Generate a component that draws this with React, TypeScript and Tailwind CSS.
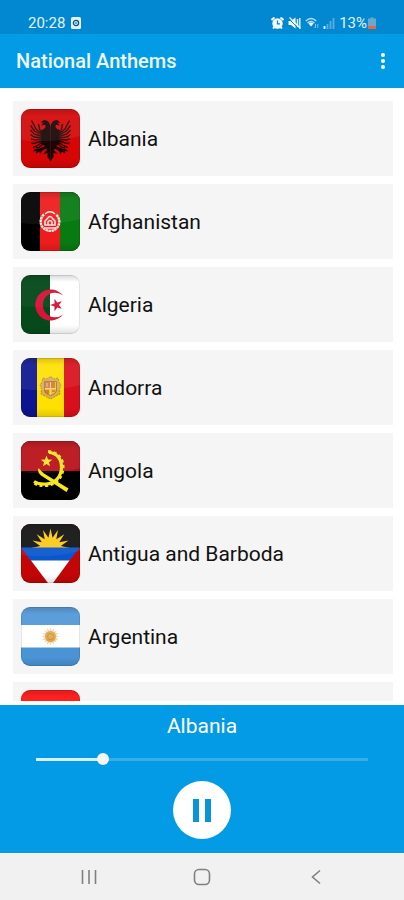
import { useState, type ReactNode } from 'react';

function star(cx: number, cy: number, outer: number, inner: number, points: number, turn = -90) {
  return Array.from({ length: points * 2 }, (_, i) => {
    const r = i % 2 ? inner : outer;
    const a = ((turn + (i * 180) / points) * Math.PI) / 180;
    return `${(cx + r * Math.cos(a)).toFixed(2)},${(cy + r * Math.sin(a)).toFixed(2)}`;
  }).join(' ');
}

function Flag({ id, gloss = 0.1, children }: { id: string; gloss?: number; children: ReactNode }) {
  return (
    <svg viewBox="0 0 59 59" className="size-[59px] shrink-0" aria-hidden="true">
      <defs>
        <clipPath id={`${id}-clip`}>
          <rect width="59" height="59" rx="9" />
        </clipPath>
        <linearGradient id={`${id}-shade`} x1="0" y1="0" x2="0" y2="1">
          <stop offset="0" stopColor="#000" stopOpacity="0.15" />
          <stop offset="0.12" stopColor="#000" stopOpacity="0" />
          <stop offset="0.85" stopColor="#000" stopOpacity="0" />
          <stop offset="1" stopColor="#000" stopOpacity="0.12" />
        </linearGradient>
      </defs>
      <g clipPath={`url(#${id}-clip)`}>
        {children}
        <path d="M0 0H59V27Q30 35 0 31Z" fill="#fff" opacity={gloss} />
        <rect width="59" height="59" fill={`url(#${id}-shade)`} />
        <rect x="0.5" y="0.5" width="58" height="58" rx="8.5" fill="none" stroke="#000" strokeOpacity="0.1" />
      </g>
    </svg>
  );
}

const eagleHalf =
  'M29.5 18C29 14 27 11 23 11L19.500 13.500L22.500 13.800L20 16.500L23.500 15.800C25 16.500 25 18 23.500 19.500L20 21.500V35L24 37L17.500 40L14 40L12 42.500L15.500 42L14.500 44.500L18.500 42.500L19 45.500L21.500 41.500L25.500 39.500L26 41L22.500 45L26.500 44L26.500 48L29.500 52.500Z';
const wingHalf =
  'M21 24L18.500 20L17.500 15M21 25L15 20L10.500 11.500M21 26L13.500 22L9.500 16.500M21 27.500L13 25L9.500 21M21 29L13 28L9.500 25.500M21 30.500L14 31L10 30M21 32L14.500 34L10.500 34.500M21 33.500L16 37L12 38.500M22 35L18 38.500L15 39';

function Albania() {
  return (
    <Flag id="albania" gloss={0.07}>
      <rect width="59" height="59" fill="#d60606" />
      <g fill="#160606">
        <path d={eagleHalf} />
        <path d={eagleHalf} transform="matrix(-1 0 0 1 59 0)" />
      </g>
      <g fill="none" stroke="#2a0606" strokeWidth="1.400">
        <path d={wingHalf} />
        <path d={wingHalf} transform="matrix(-1 0 0 1 59 0)" />
      </g>
    </Flag>
  );
}

function Afghanistan() {
  return (
    <Flag id="afghanistan" gloss={0.06}>
      <rect width="59" height="59" fill="#000" />
      <rect x="19" width="20" height="59" fill="#ee1c1c" />
      <rect x="39" width="20" height="59" fill="#087a12" />
      <g fill="none" stroke="#fae4df">
        <path d="M23 22.500A9.300 9.300 0 1 0 35 22.500" strokeWidth="2.400" strokeDasharray="2.500 0.500" />
        <path d="M24 22Q29 17.500 34 22M25.500 21Q29 18.500 32.500 21" strokeWidth="1.500" />
        <path d="M24 33V29L26 27Q29 22 32 27L34 29V33ZM27 33V30Q29 27 31 30V33M23 36H35" strokeWidth="1.600" />
      </g>
    </Flag>
  );
}

function Algeria() {
  return (
    <Flag id="algeria" gloss={0.04}>
      <rect width="59" height="59" fill="#fff" />
      <rect width="29" height="59" fill="#064a1c" />
      <path d="M42 20.500A15.500 15.500 0 1 0 42 39.500A12.300 12.300 0 1 1 42 20.500Z" fill="#d8143a" />
      <polygon points={star(35.5, 30, 6.5, 2.5, 5, 180)} fill="#d8143a" />
    </Flag>
  );
}

function Andorra() {
  return (
    <Flag id="andorra" gloss={0.08}>
      <rect width="59" height="59" fill="#ffe000" />
      <rect width="16" height="59" fill="#0c1490" />
      <rect x="43" width="16" height="59" fill="#d80f1c" />
      <path
        d="M22 20L26 21L29.500 18.500L33 21L37 20L38 24L40 27L38.500 31L39 36L35 38L29.500 41L24 38L20 36L20.500 31L19 27L21 24Z"
        fill="#d8b04a"
        stroke="#a98a4a"
        strokeDasharray="2 1"
      />
      <path d="M23.500 23.500H35.500V32Q35 36 29.500 37.500Q24 36 23.500 32Z" fill="#efc12c" stroke="#b0783c" />
      <path d="M24 24H29V30H24Z" fill="#d87852" />
      <path d="M31 24V30M33 24V30M25 32V35M27 32V36M31 33H34" stroke="#cf4c28" strokeWidth="1.200" />
      <path d="M26 25V29M29.500 24V37M24 30.500H35" stroke="#f4dc90" strokeWidth="0.800" />
    </Flag>
  );
}

function Angola() {
  return (
    <Flag id="angola" gloss={0.08}>
      <rect width="59" height="59" fill="#000" />
      <rect width="59" height="30" fill="#b80c14" />
      <g fill="none" stroke="#f8e71c">
        <path d="M28 11.500C36 12 40.500 18 40.500 26C40.500 36 34 42.500 25 43C20 43.500 16 42.500 13 40.500" strokeWidth="3.200" />
        <path d="M27 10.500C37 11 42 18 42 26C42 37 34 44 25 44.500C20 45 16 44 12.500 41.500" strokeWidth="3" strokeDasharray="3 2.500" />
      </g>
      <path d="M17.500 27Q20 30 23 32.500L47.500 47.500L45.500 51L34 43.500L20 34.500Q16 31 17.500 27Z" fill="#f8e71c" />
      <polygon points={star(25.5, 20.5, 6, 2.6, 5)} fill="#fce32a" />
    </Flag>
  );
}

function Antigua() {
  return (
    <Flag id="antigua" gloss={0.06}>
      <rect width="59" height="59" fill="#c30505" />
      <rect width="59" height="24" fill="#141414" />
      <polygon points={star(29.5, 24, 19.5, 10.5, 16)} fill="#fcc91c" />
      <path d="M0 23.500H59L48 37H10Z" fill="#0a56cc" />
      <path d="M10 36.500H48.500L32 59H27Z" fill="#fff" />
    </Flag>
  );
}

function Argentina() {
  return (
    <Flag id="argentina" gloss={0.1}>
      <rect width="59" height="59" fill="#4a94d6" />
      <rect y="18" width="59" height="22.500" fill="#fff" />
      <polygon points={star(29.5, 29.5, 9, 5.5, 16)} fill="#ecd3a4" />
      <circle cx="29.500" cy="29.500" r="5.500" fill="#e2a548" />
      <circle cx="29.500" cy="29.500" r="3" fill="none" stroke="#c98a34" />
    </Flag>
  );
}

function Armenia() {
  return (
    <Flag id="armenia" gloss={0.06}>
      <rect width="59" height="20" fill="#ff1414" />
      <rect y="20" width="59" height="20" fill="#1437a8" />
      <rect y="40" width="59" height="19" fill="#f5a400" />
    </Flag>
  );
}

const countries = [
  { id: 'al', name: 'Albania', Icon: Albania },
  { id: 'af', name: 'Afghanistan', Icon: Afghanistan },
  { id: 'dz', name: 'Algeria', Icon: Algeria },
  { id: 'ad', name: 'Andorra', Icon: Andorra },
  { id: 'ao', name: 'Angola', Icon: Angola },
  { id: 'ag', name: 'Antigua and Barboda', Icon: Antigua },
  { id: 'ar', name: 'Argentina', Icon: Argentina },
  { id: 'am', Icon: Armenia },
];

function StatusBar() {
  return (
    <div className="flex h-[34px] shrink-0 items-end justify-between bg-[#0288d1] pr-7 pb-[3px] pl-7 text-[15px] leading-4 text-[#e3f3fc]">
      <div className="flex items-center gap-[6px]">
        <span>20:28</span>
        <svg viewBox="0 0 10 12" className="h-3 w-[10px]" aria-hidden="true">
          <rect width="10" height="12" rx="1.500" fill="#e3f3fc" />
          <circle cx="5" cy="6" r="2.600" fill="none" stroke="#0e4f77" strokeWidth="1.300" />
          <path d="M5 5V7" stroke="#0e4f77" />
        </svg>
      </div>
      <div className="flex items-center gap-1">
        <svg viewBox="0 0 13 12" className="h-3 w-[13px]" aria-hidden="true">
          <circle cx="6.500" cy="6.500" r="5.200" fill="#f2faff" />
          <path d="M0.500 3L3.500 0.500M12.500 3L9.500 0.500M2 11.500L4 9.500M11 11.500L9 9.500" stroke="#f2faff" strokeWidth="2" />
          <path d="M6.500 3.500V6.800H9" fill="none" stroke="#0288d1" strokeWidth="1.200" />
        </svg>
        <svg viewBox="0 0 13 12" className="h-3 w-[13px]" aria-hidden="true">
          <path d="M0.500 4H3L7.500 0.500V11.500L3 8H0.500Z" fill="#f2faff" />
          <path d="M9.500 2V10.500M11.800 1V11.500" stroke="#d5ecf9" strokeWidth="1.500" />
          <path d="M0.500 1.500L10.500 11.500" stroke="#0288d1" />
          <path d="M1.500 0.500L12.500 11.500" stroke="#f2faff" strokeWidth="1.300" />
        </svg>
        <svg viewBox="0 0 14 12" className="h-3 w-[14px]" aria-hidden="true">
          <path d="M0.800 4Q6 -0.800 11.200 4M2.500 6Q6 3 9.500 6" fill="none" stroke="#b9def3" strokeWidth="1.400" />
          <path d="M3.500 6.500Q6 4.500 8.500 6.500L6 9.500Z" fill="#f2faff" />
          <path d="M10.500 7V11M9.300 9.800L10.500 11M12.800 11V7" stroke="#7fc0e4" />
        </svg>
        <svg viewBox="0 0 12 12" className="h-3 w-3" aria-hidden="true">
          <path d="M1.500 9V12" stroke="#f2faff" strokeWidth="1.800" />
          <path d="M4.500 7V12M7.500 4V12M10.500 1V12" stroke="#5daede" strokeWidth="1.800" />
        </svg>
        <span className="flex items-center gap-px">
          13%
          <svg viewBox="0 0 8 12" className="h-3 w-2" aria-hidden="true">
            <path d="M2.500 0.500H5.500V1.500H8V12H0V1.500H2.500Z" fill="#6aa9cb" />
            <path d="M0 9H8V12H0Z" fill="#f0643c" />
          </svg>
        </span>
      </div>
    </div>
  );
}

function Player() {
  const [position, setPosition] = useState(19);
  const fill = `calc(6px + (100% - 12px) * ${position / 100})`;

  return (
    <section className="flex h-[148px] shrink-0 flex-col items-center bg-[#039be5] pt-[7px] text-white">
      <h2 className="text-[21px] leading-7">Albania</h2>
      <div className="mt-[13px] flex w-full px-9">
        <input
          type="range"
          aria-label="Position"
          value={position}
          onChange={(e) => setPosition(Number(e.target.value))}
          style={{
            backgroundImage: `linear-gradient(to right, #d9f0fb ${fill}, #35aeea ${fill})`,
          }}
          className="h-3 w-full appearance-none bg-[length:100%_3px] bg-center bg-no-repeat [&::-webkit-slider-thumb]:size-3 [&::-webkit-slider-thumb]:appearance-none [&::-webkit-slider-thumb]:rounded-full [&::-webkit-slider-thumb]:bg-[#f5f5f5]"
        />
      </div>
      <button
        type="button"
        aria-label="Pause"
        className="mt-4 flex size-[58px] items-center justify-center gap-[6px] rounded-full bg-white"
      >
        <span className="h-[23px] w-[6px] bg-[#0b93da]" />
        <span className="h-[23px] w-[6px] bg-[#0b93da]" />
      </button>
    </section>
  );
}

function NavigationBar() {
  return (
    <nav className="grid h-[47px] shrink-0 grid-cols-[1fr_50px_1fr] items-center bg-[#f1f1f1] text-[#808080]">
      <button type="button" aria-label="Recent apps" className="flex justify-self-center">
        <svg viewBox="0 0 16 16" className="size-4" fill="none" stroke="currentColor" strokeWidth="1.600">
          <path d="M1.500 1V15M8 1V15M14.500 1V15" />
        </svg>
      </button>
      <button type="button" aria-label="Home" className="flex justify-self-center">
        <svg viewBox="0 0 18 18" className="size-[18px]" fill="none" stroke="currentColor" strokeWidth="1.600">
          <rect x="1.500" y="1.500" width="15" height="15" rx="4.500" />
        </svg>
      </button>
      <button type="button" aria-label="Back" className="flex justify-self-center">
        <svg viewBox="0 0 16 16" className="size-4" fill="none" stroke="currentColor" strokeWidth="1.600">
          <path d="M12 1.500L4.500 8L12 14.500" />
        </svg>
      </button>
    </nav>
  );
}

export default function App() {
  return (
    <div className="flex h-screen flex-col bg-white font-['Roboto',sans-serif]">
      <StatusBar />
      <header className="flex h-[54px] shrink-0 items-center justify-between bg-[#039be5] pr-[19px] pl-4">
        <h1 className="text-xl leading-6 font-medium text-[#eef9ff]">National Anthems</h1>
        <button type="button" aria-label="More options" className="flex flex-col gap-[2px]">
          <span className="size-1 rounded-full bg-white" />
          <span className="size-1 rounded-full bg-white" />
          <span className="size-1 rounded-full bg-white" />
        </button>
      </header>
      <main className="mb-1 min-h-0 flex-1 overflow-hidden pt-[13px] pr-[11px] pl-[13px]">
        <ul className="flex flex-col gap-2">
          {countries.map(({ id, name, Icon }) => (
            <li key={id}>
              <button
                type="button"
                className="flex w-full items-center gap-2 bg-[#f5f5f5] p-2 text-left text-[21px] leading-7 text-[#111]"
              >
                <Icon />
                {name}
              </button>
            </li>
          ))}
        </ul>
      </main>
      <Player />
      <NavigationBar />
    </div>
  );
}
